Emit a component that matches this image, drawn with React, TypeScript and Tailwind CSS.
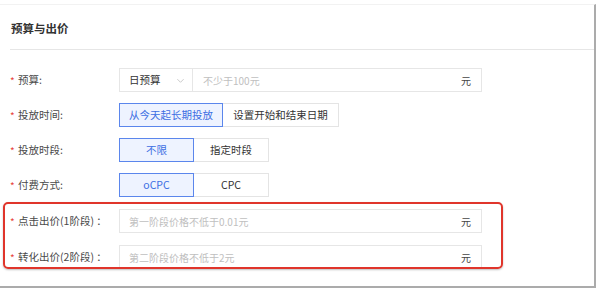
import React from 'react'

const Label: React.FC<{ text: string }> = ({ text }) => (
  <div className="w-[119px] shrink-0 flex items-center pl-[10px] text-[10.5px] text-[#4a4a4a]">
    <span className="text-[#e8453c] w-[8px] text-[10px]">*</span>
    <span>{text}</span>
  </div>
)

const Seg: React.FC<{ items: { label: string; w: string }[] }> = ({ items }) => (
  <div className="flex h-full">
    {items.map((it, i) => (
      <div
        key={i}
        className={`${it.w} h-full flex items-center justify-center text-[10.5px] border ${
          i === 0
            ? 'bg-[#eef3ff] border-[#5b86ec] text-[#3d6fe3] z-10'
            : 'bg-white border-[#e4e4e4] border-l-0 text-[#333]'
        }`}
      >
        {it.label}
      </div>
    ))}
  </div>
)

const PriceInput: React.FC<{ placeholder: string }> = ({ placeholder }) => (
  <div className="w-[363px] h-full border border-[#e6e6e6] bg-white flex items-center justify-between pl-[9px] pr-[10px] text-[10px]">
    <span className="text-[#c0c0c0]">{placeholder}</span>
    <span className="text-[#444]">元</span>
  </div>
)

export default function App() {
  return (
    <div
      className="w-[597px] h-[288px] bg-white"
      style={{ fontFamily: '"Noto Sans CJK SC", "Noto Sans", sans-serif' }}
    >
      <div className="w-[596px] h-[285px] bg-white border-r-[2px] border-b-[3px] border-[#ababab] border-t border-t-[#f2f2f2] mt-[4px] pt-[16px]">
        <div className="px-[11px] text-[11.5px] font-bold text-[#333] leading-[14px]">预算与出价</div>
        <div className="ml-[10px] mt-[14px] border-t border-[#e6e6e6]" />

        <div className="flex flex-col gap-[11px] mt-[18px]">
          {/* budget */}
          <div className="flex h-[24px]">
            <Label text="预算:" />
            <div className="flex h-full">
              <div className="w-[74px] h-full border border-[#e6e6e6] flex items-center justify-between pl-[9px] pr-[7px] text-[10.5px] text-[#333]">
                <span>日预算</span>
                <svg width="9" height="9" viewBox="0 0 10 10" fill="none" stroke="#bdbdbd" strokeWidth="0.9">
                  <path d="M1.5 3.5 L5 7 L8.5 3.5" />
                </svg>
              </div>
              <div className="w-[289px] h-full border border-l-0 border-[#e6e6e6] flex items-center justify-between pl-[10px] pr-[10px] text-[10px]">
                <span className="text-[#c0c0c0]">不少于100元</span>
                <span className="text-[#444]">元</span>
              </div>
            </div>
          </div>

          <div className="flex h-[24px]">
            <Label text="投放时间:" />
            <Seg
              items={[
                { label: '从今天起长期投放', w: 'w-[104px]' },
                { label: '设置开始和结束日期', w: 'w-[116px]' },
              ]}
            />
          </div>

          <div className="flex h-[24px]">
            <Label text="投放时段:" />
            <Seg
              items={[
                { label: '不限', w: 'w-[75px]' },
                { label: '指定时段', w: 'w-[75px]' },
              ]}
            />
          </div>

          <div className="flex h-[24px]">
            <Label text="付费方式:" />
            <Seg
              items={[
                { label: 'oCPC', w: 'w-[75px]' },
                { label: 'CPC', w: 'w-[75px]' },
              ]}
            />
          </div>

          <div className="relative flex flex-col gap-[12px] pt-[1px]">
            <div className="flex h-[24px]">
              <Label text="点击出价(1阶段) ：" />
              <PriceInput placeholder="第一阶段价格不低于0.01元" />
            </div>
            <div className="flex h-[24px]">
              <Label text="转化出价(2阶段) ：" />
              <PriceInput placeholder="第二阶段价格不低于2元" />
            </div>
            <div className="absolute left-[3px] top-[-6px] w-[500px] h-[67px] border-[2.5px] border-[#e0352b] rounded-[5px] shadow-[0_1px_2px_rgba(0,0,0,0.25)]" />
          </div>
        </div>
      </div>
    </div>
  )
}
